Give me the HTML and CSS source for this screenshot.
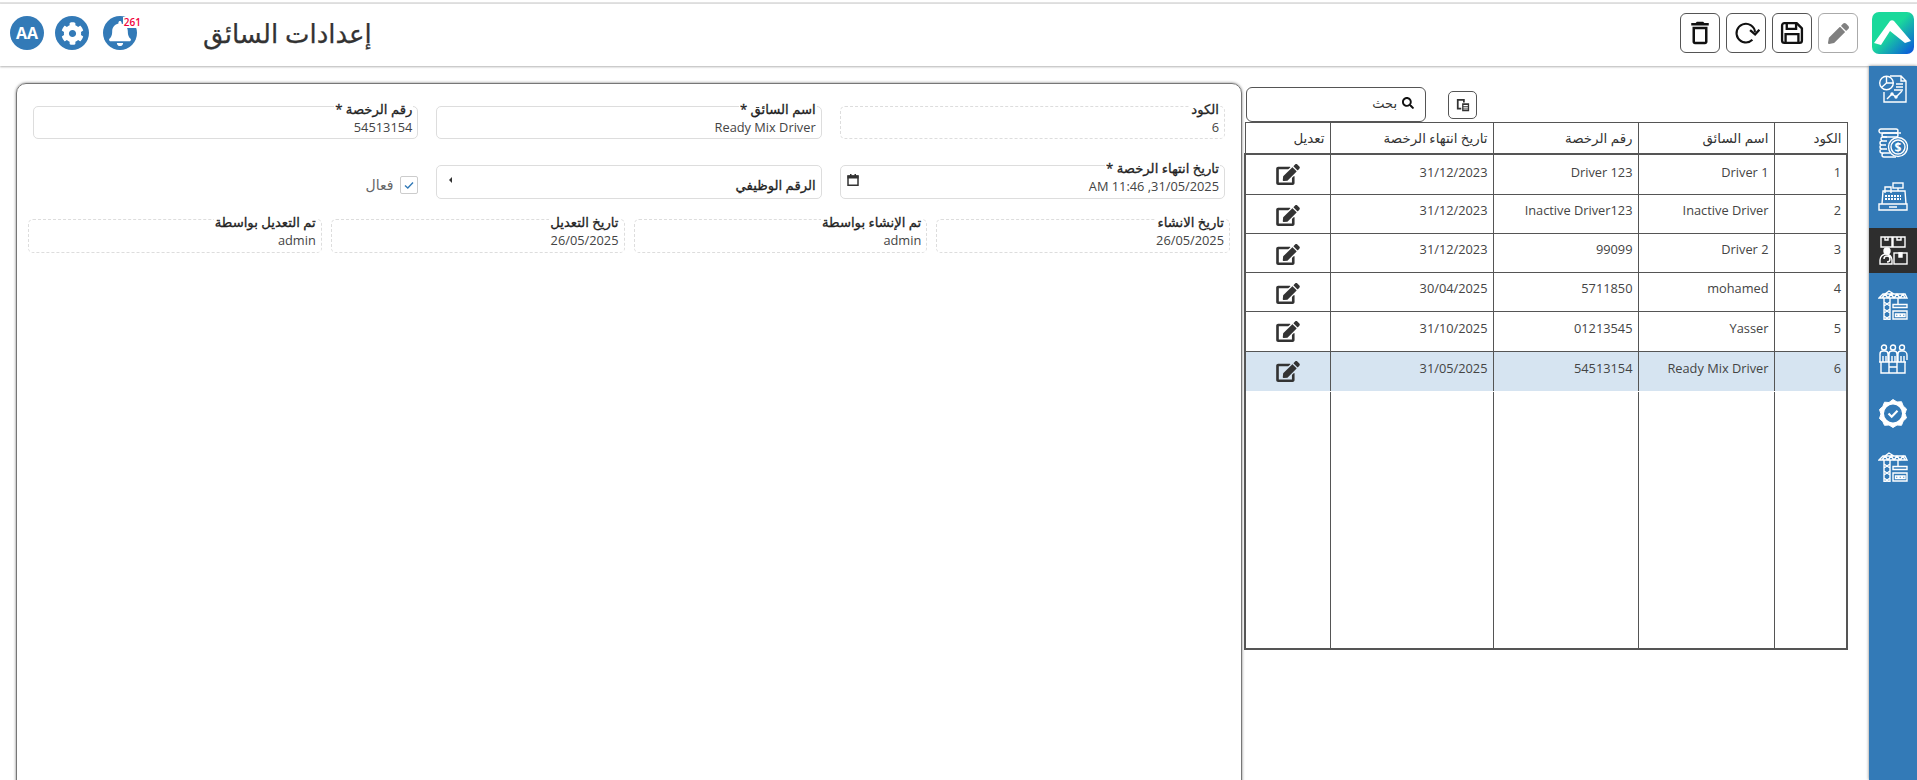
FILE: index.html
```html
<!DOCTYPE html>
<html lang="ar" dir="rtl">
<head>
<meta charset="utf-8">
<title>إعدادات السائق</title>
<link rel="stylesheet" href="styles.css">
</head>
<body>
<div class="topline"></div>
<header class="header">
  <div class="header-start">
    <div class="logo">
      <svg viewBox="0 0 42 42" width="42" height="42">
        <defs><linearGradient id="lg" x1="0" y1="0" x2="1" y2="1"><stop offset="0.45" stop-color="#1ad99b"/><stop offset="1" stop-color="#0a4fe0"/></linearGradient></defs>
        <rect width="42" height="42" rx="7" fill="url(#lg)"/>
        <path d="M2 31L18 9c1-1 3-1 4 0l17 20-6 2-15-12-9 14z" fill="#fff"/>
      </svg>
    </div>
    <div class="actions">
      <button class="tool disabled" type="button"><svg viewBox="0 0 512 512" width="21" height="21"><path fill="#808080" d="M497.9 142.1l-46.1 46.1c-4.7 4.7-12.3 4.7-17 0l-111-111c-4.7-4.7-4.7-12.3 0-17l46.1-46.1c18.7-18.7 49.1-18.7 67.9 0l60.1 60.1c18.8 18.7 18.8 49.1 0 67.9zM284.2 99.8L21.6 362.4.4 483.9c-2.9 16.4 11.4 30.6 27.8 27.8l121.5-21.3 262.6-262.6c4.7-4.7 4.7-12.3 0-17l-111-111c-4.8-4.7-12.4-4.7-17.1 0z"/></svg></button>
      <button class="tool" type="button"><svg viewBox="0 0 24 24" width="28" height="28"><path fill="none" stroke="#111" stroke-width="2" stroke-linejoin="round" d="M3.5 5.5a2 2 0 0 1 2-2H16l4.5 4.5v10.5a2 2 0 0 1-2 2h-13a2 2 0 0 1-2-2z"/><path fill="none" stroke="#111" stroke-width="2" d="M7.5 3.5v5h8v-5M6.500 20.500v-7.500h11v7.500"/></svg></button>
      <button class="tool" type="button"><svg viewBox="0 0 24 24" width="28" height="28"><path fill="none" stroke="#111" stroke-width="1.800" d="M17.500 17.800A8 8 0 1 1 19.800 11"/><path fill="none" stroke="#111" stroke-width="2" d="M15.500 9.500l4.300 3.700 3.700-4"/></svg></button>
      <button class="tool" type="button"><svg viewBox="0 0 24 24" width="30" height="30"><path fill="#111" d="M6 19c0 1.100.9 2 2 2h8c1.100 0 2-.9 2-2V7H6v12zM8 9h8v10H8V9zm7.500-5l-1-1h-5l-1 1H5v2h14V4z"/></svg></button>
    </div>
  </div>
  <div class="header-end">
    <h1 class="title">إعدادات السائق</h1>
    <div class="round-icons">
      <div class="round bell">
        <svg viewBox="0 0 448 512" width="22" height="25"><path fill="#fff" d="M224 512c35.320 0 63.970-28.650 63.970-64H160.030c0 35.350 28.650 64 63.970 64zm215.390-149.710c-19.320-20.760-55.470-51.990-55.470-154.290 0-77.700-54.480-139.900-127.940-155.160V32c0-17.670-14.320-32-31.980-32s-31.980 14.330-31.980 32v20.840C118.560 68.100 64.080 130.300 64.080 208c0 102.300-36.150 133.530-55.470 154.290-6 6.450-8.660 14.160-8.610 21.710.11 16.400 12.980 32 32.100 32h383.800c19.120 0 32-15.600 32.100-32 .05-7.550-2.610-15.270-8.610-21.710z"/></svg>
        <span class="badge">261</span>
      </div>
      <div class="round"><svg viewBox="0 0 512 512" width="23" height="23"><path fill="#fff" d="M487.400 315.700l-42.600-24.600c4.300-23.200 4.300-47 0-70.200l42.600-24.600c4.900-2.800 7.100-8.600 5.500-14-11.100-35.600-30-67.800-54.700-94.600-3.800-4.100-10-5.100-14.800-2.300L380.800 110c-17.900-15.400-38.500-27.300-60.800-35.100V25.800c0-5.600-3.900-10.500-9.400-11.700-36.700-8.200-74.300-7.800-109.200 0-5.500 1.200-9.400 6.100-9.400 11.700V75c-22.200 7.900-42.800 19.800-60.800 35.100L88.700 85.500c-4.900-2.800-11-1.900-14.800 2.300-24.700 26.700-43.600 58.900-54.700 94.600-1.700 5.400.6 11.200 5.500 14L67.300 221c-4.300 23.200-4.300 47 0 70.200l-42.600 24.600c-4.900 2.800-7.100 8.600-5.500 14 11.100 35.600 30 67.800 54.700 94.600 3.800 4.100 10 5.100 14.800 2.300l42.600-24.600c17.900 15.400 38.500 27.300 60.800 35.100v49.200c0 5.600 3.900 10.500 9.400 11.700 36.700 8.200 74.300 7.800 109.200 0 5.500-1.200 9.400-6.100 9.400-11.700v-49.200c22.200-7.900 42.800-19.800 60.800-35.100l42.600 24.600c4.900 2.800 11 1.900 14.800-2.300 24.700-26.700 43.600-58.900 54.700-94.600 1.500-5.500-.7-11.300-5.600-14.100zM256 336c-44.100 0-80-35.900-80-80s35.900-80 80-80 80 35.900 80 80-35.900 80-80 80z"/></svg></div>
      <div class="round avatar">AA</div>
    </div>
  </div>
</header>

<svg class="defs" width="0" height="0">
  <symbol id="i-crane" viewBox="0 0 30 30">
    <path d="M1 8L5 4h22l2 4zM7 4l4-3 5 3M4 8l3-4 3 4 3-4 3 4 3-4 3 4 3-4 2 4"/>
    <path d="M6 8v22h6V8M6 12l6 4M12 12l-6 4M6 19l6 4M12 19l-6 4M6 26l6 4M12 26l-6 4"/>
    <path d="M20 8v6M15 14.500h14v3H15zM15 21h14v8H15zM17.500 24h2.500v2.500h-2.500zM21 24h2.500v2.500H21zM24.500 24H27v2.500h-2.500z"/>
  </symbol>
</svg>

<div class="main">
  <nav class="sidebar">
    <a class="nav-item"><svg class="nav-icon" viewBox="0 0 30 30"><path d="M12 2h11l5 5v21H6V18M23 2v5h5"/><circle cx="8.500" cy="9" r="6.800"/><path d="M8.500 2.200V9h6.800M8.500 9l-5 4.500"/><path d="M18 10h7M18 13h7M16 16h9"/><path d="M9 25l5-5 4 3 6-6"/><circle cx="14" cy="20" r="1"/><circle cx="18" cy="23" r="1"/></svg></a>
    <a class="nav-item"><svg class="nav-icon" viewBox="0 0 30 30"><rect x="1" y="1" width="19" height="4" rx="2"/><rect x="4" y="5" width="16" height="4" rx="2"/><path d="M20 5h3M9 9h-4a2 2 0 0 0 0 4h4M9 13H4a2 2 0 0 0 0 4h4M8 17H4a2 2 0 0 0 0 4h4M9 21H4a2 2 0 0 0 0 4h6M12 25H6a2 2 0 0 0 0 4h12"/><circle cx="20" cy="19" r="9.500"/><circle cx="20" cy="19" r="7"/><text class="dollar" x="20" y="23.500">$</text></svg></a>
    <a class="nav-item"><svg class="nav-icon" viewBox="0 0 30 30"><rect x="15" y="1" width="10" height="5" /><path d="M20 6v3M7 11V5h6v6"/><path d="M4 22l1-13h22l1 13"/><path d="M1 22h28v6H1zM11 25h8"/><path class="dots" d="M7 14h16M7 17h16"/></svg></a>
    <a class="nav-item active"><svg class="nav-icon" viewBox="0 0 30 30"><path d="M3 1h11v10H3zM15 1h12v10H15zM7 1v3h3V1M19 1v3h4V1"/><circle class="solid" cx="9" cy="15" r="3"/><path d="M2 28v-4a6 6 0 0 1 12 0v4zM6 23a3 3 0 1 1 3 3"/><rect x="16" y="17" width="13" height="11"/><path class="solid" d="M21 17v4h3v-4z"/></svg></a>
    <a class="nav-item"><svg class="nav-icon"><use href="#i-crane"/></svg></a>
    <a class="nav-item"><svg class="nav-icon" viewBox="0 0 30 30"><circle cx="6" cy="3.500" r="2.500"/><circle cx="15" cy="3.500" r="2.500"/><circle cx="24" cy="3.500" r="2.500"/><path d="M2 18V10a3 3 0 0 1 3-3h2a3 3 0 0 1 3 3v8M11 18V10a3 3 0 0 1 3-3h2a3 3 0 0 1 3 3v8M20 18V10a3 3 0 0 1 3-3h2a4 4 0 0 1 4 4v5"/><path d="M5 12v6M8 12v6M14 12v6M17 12v6M23 12v6M26 12v6"/><path d="M1 18h27M3 18v11h24V18M3 29h24M11 18v11M19 18v11M11 23h8"/></svg></a>
    <a class="nav-item"><svg class="nav-icon" viewBox="0 0 30 30"><path class="badge-shape" d="M15 1.500l4 2.500 4.500-.3 1.700 4.300 3.300 3-1.500 4.500 1.500 4.500-3.300 3-1.700 4.300-4.500-.3-4 2.500-4-2.500-4.500.3L4.800 23.500l-3.300-3L3 16 1.500 11.500l3.300-3 1.700-4.300 4.500.3z"/><circle class="badge-inner" cx="15" cy="15.500" r="8.300"/><path class="thick" d="M10.500 15.500l3.200 3.200 5.800-6"/></svg></a>
    <a class="nav-item"><svg class="nav-icon"><use href="#i-crane"/></svg></a>
  </nav>

  <section class="list">
    <div class="list-tools">
      <button class="copy" type="button"><svg viewBox="0 0 16 16" width="14" height="14"><path fill="#333" d="M1 1h9v4H8V3H3v8h3v2H1z"/><path fill="#333" d="M7 6h8v9H7zM8.500 8v1H13.500V8zM8.500 10v1H13.500v-1zM8.500 12v1H13.500v-1z"/></svg></button>
      <label class="search">
        <svg viewBox="0 0 512 512" width="12" height="12"><path fill="#111" d="M505 442.700L405.300 343c-4.500-4.500-10.600-7-17-7H372c27.600-35.300 44-79.700 44-128C416 93.100 322.900 0 208 0S0 93.100 0 208s93.100 208 208 208c48.300 0 92.700-16.400 128-44v16.300c0 6.400 2.500 12.500 7 17l99.700 99.700c9.400 9.400 24.600 9.400 33.900 0l28.300-28.300c9.400-9.400 9.400-24.600.1-34zM208 336c-70.700 0-128-57.200-128-128 0-70.700 57.200-128 128-128 70.700 0 128 57.200 128 128 0 70.700-57.200 128-128 128z"/></svg>
        <span>بحث</span>
      </label>
    </div>
    <table class="grid">
      <colgroup><col class="c-code"><col class="c-name"><col class="c-lic"><col class="c-exp"><col class="c-edit"></colgroup>
      <thead><tr><th>الكود</th><th>اسم السائق</th><th>رقم الرخصة</th><th>تاريخ انتهاء الرخصة</th><th>تعديل</th></tr></thead>
      <tbody>
        <tr class="first"><td>1</td><td>Driver 1</td><td>Driver 123</td><td>31/12/2023</td><td class="edit"><svg class="edit-icon"><use href="#i-edit"/></svg></td></tr>
        <tr><td>2</td><td>Inactive Driver</td><td>Inactive Driver123</td><td>31/12/2023</td><td class="edit"><svg class="edit-icon"><use href="#i-edit"/></svg></td></tr>
        <tr><td>3</td><td>Driver 2</td><td>99099</td><td>31/12/2023</td><td class="edit"><svg class="edit-icon"><use href="#i-edit"/></svg></td></tr>
        <tr><td>4</td><td>mohamed</td><td>5711850</td><td>30/04/2025</td><td class="edit"><svg class="edit-icon"><use href="#i-edit"/></svg></td></tr>
        <tr class="tall"><td>5</td><td>Yasser</td><td>01213545</td><td>31/10/2025</td><td class="edit"><svg class="edit-icon"><use href="#i-edit"/></svg></td></tr>
        <tr class="tall selected"><td>6</td><td>Ready Mix Driver</td><td>54513154</td><td>31/05/2025</td><td class="edit"><svg class="edit-icon"><use href="#i-edit"/></svg></td></tr>
        <tr class="filler"><td></td><td></td><td></td><td></td><td></td></tr>
      </tbody>
    </table>
  </section>

  <section class="panel">
    <div class="form-row">
      <div class="field dashed"><label>الكود</label><div class="value">6</div></div>
      <div class="field"><label>اسم السائق *</label><div class="value">Ready Mix Driver</div></div>
      <div class="field"><label>رقم الرخصة *</label><div class="value">54513154</div></div>
    </div>
    <div class="form-row second">
      <div class="field"><label>تاريخ انتهاء الرخصة *</label><div class="value">31/05/2025, 11:46 AM</div>
        <svg class="cal" viewBox="0 0 14 14" width="14" height="14"><path fill="none" stroke="#333" stroke-width="1.500" d="M2 3h10v9.200H2z"/><path fill="#333" d="M1.500 2.500h11v3h-11zM4 1h1.500v2H4zM8.500 1H10v2H8.500z"/></svg>
      </div>
      <div class="field select"><span class="select-text">الرقم الوظيفي</span><span class="caret"></span></div>
      <div class="check-cell"><span class="check"><svg viewBox="0 0 12 12" width="12" height="12"><path fill="none" stroke="#337ab7" stroke-width="1.400" d="M2 6.500l2.800 2.500L10 3.500"/></svg></span><span class="check-label">فعال</span></div>
    </div>
    <div class="form-row audit">
      <div class="field dashed"><label>تاريخ الانشاء</label><div class="value">26/05/2025</div></div>
      <div class="field dashed"><label>تم الإنشاء بواسطة</label><div class="value">admin</div></div>
      <div class="field dashed"><label>تاريخ التعديل</label><div class="value">26/05/2025</div></div>
      <div class="field dashed"><label>تم التعديل بواسطة</label><div class="value">admin</div></div>
    </div>
  </section>
</div>

<svg class="defs" width="0" height="0">
  <symbol id="i-edit" viewBox="0 0 576 512"><path d="M402.600 83.200l90.200 90.200c3.800 3.800 3.800 10 0 13.800L274.400 405.600l-92.800 10.300c-12.400 1.400-22.900-9.100-21.500-21.500l10.300-92.800L388.800 83.200c3.800-3.800 10-3.800 13.800 0zm162-22.900l-48.800-48.800c-15.200-15.200-39.900-15.200-55.200 0l-35.400 35.400c-3.800 3.800-3.800 10 0 13.800l90.200 90.200c3.800 3.800 10 3.800 13.800 0l35.400-35.400c15.200-15.300 15.200-40 0-55.200zM384 346.200V448H64V128h229.800c3.200 0 6.200-1.300 8.500-3.500l40-40c7.600-7.600 2.200-20.500-8.500-20.500H48C21.500 64 0 85.500 0 112v352c0 26.500 21.500 48 48 48h352c26.500 0 48-21.500 48-48V306.200c0-10.700-12.900-16-20.500-8.500l-40 40c-2.200 2.300-3.500 5.300-3.500 8.500z"/></symbol>
</svg>
</body>
</html>
```
FILE: styles.css
```css
* { box-sizing: border-box; }
html, body { margin: 0; height: 100%; overflow: hidden; background: #fff; }
body { font-family: "Open Sans", "Noto Sans", "DejaVu Sans", sans-serif; font-size: 12.8px; color: #333; }
.defs { position: absolute; }

.topline { height: 2px; margin-top: 2px; background: #e2e2e2; }
.header { height: 62px; display: flex; justify-content: space-between; align-items: center; background: #fff; box-shadow: 0 1px 2px rgba(0,0,0,.3); position: relative; z-index: 2; padding: 0 3px 4px 10px; }
.header-start { display: flex; align-items: center; gap: 14px; }
.logo { width: 42px; height: 42px; }
.logo svg { display: block; }
.actions { display: flex; gap: 6px; }
.tool { width: 40px; height: 40px; padding: 0; display: flex; align-items: center; justify-content: center; background: #fff; border: 1px solid #555; border-radius: 6px; }
.tool.disabled { border-color: #aaa; }

.header-end { display: flex; align-items: center; gap: 66px; }
.title { margin: 0; font-size: 26px; font-weight: 400; color: #333; line-height: 40px; -webkit-text-stroke: .25px #333; }
.round-icons { display: flex; align-items: center; gap: 11px; }
.round { width: 34px; height: 34px; border-radius: 50%; background: #337ab7; display: flex; align-items: center; justify-content: center; position: relative; }
.bell { margin-left: 3px; }
.avatar { color: #fff; font-weight: 700; font-size: 16px; font-family: "Open Sans", sans-serif; }
.badge { position: absolute; top: 1px; right: -5px; font-size: 10px; line-height: 11px; font-weight: 600; padding: 0 1px; background: #fff; color: #f0003c; font-family: "Open Sans", sans-serif; }

.main { display: flex; height: 714px; align-items: flex-start; }
.sidebar { width: 48px; height: 714px; background: #337ab7; display: flex; flex-direction: column; gap: 9px; box-shadow: 0 0 3px rgba(0,0,0,.5); position: relative; z-index: 3; flex: none; }
.nav-item { height: 45px; display: flex; align-items: center; justify-content: center; }
.nav-item.active { background: #2e2e2e; }
.nav-icon { width: 30px; height: 30px; fill: none; stroke: #fff; stroke-width: 1.4; }
.nav-icon .dollar { font-size: 12px; text-anchor: middle; fill: #fff; stroke: none; font-family: "Open Sans", sans-serif; font-weight: 700; }
.nav-icon .dots { stroke-dasharray: 2 1; stroke-width: 2; }
.nav-icon .thick { stroke-width: 2.2; }
.nav-icon .solid { fill: #fff; }
.nav-icon .badge-shape { fill: #fff; stroke-width: 1; }
.nav-icon .badge-inner { fill: #337ab7; stroke: #337ab7; }

.list { width: 602px; margin-right: 21px; padding-top: 21px; flex: none; }
.list-tools { display: flex; justify-content: flex-end; align-items: center; height: 35px; gap: 22px; }
.copy { width: 29px; height: 28px; background: #fff; border: 1px solid #555; border-radius: 5px; padding: 0; display: flex; align-items: center; justify-content: center; }
.search { width: 180px; height: 35px; border: 1px solid #555; border-radius: 6px; display: flex; align-items: center; gap: 5px; padding: 0 11px 4px; color: #333; font-size: 13px; }

.grid { width: 602px; height: 528px; border-collapse: collapse; table-layout: fixed; font-size: 12.8px; color: #444; }
.c-code { width: 73px; } .c-name { width: 136px; } .c-lic { width: 145px; } .c-exp { width: 163px; } .c-edit { width: 85px; }
.grid th { height: 31px; font-weight: 400; font-size: 13.4px; text-align: right; padding: 0 5px; border: 1px solid #555; border-bottom: 2px solid #555; color: #333; }
.grid td { height: 39px; text-align: right; vertical-align: top; padding: 6px 5px 0; border-left: 1px solid #555; border-right: 1px solid #555; border-bottom: 1px solid #555; line-height: 18px; }
.grid tbody { border: 2px solid #555; }
.grid tr.first td { height: 41px; padding-top: 8px; }
.grid tr.tall td { height: 40px; padding-top: 7px; }
.grid tr.selected td { background: #d6e4f1; border-bottom-color: #fff; }
.grid tr.filler td { height: auto; border-bottom: 0; }
.grid tr td.edit { text-align: center; padding: 2px 0 0; vertical-align: middle; }
.grid tr.first td.edit { padding: 0; }
.grid tr.tall td.edit { padding: 0; }
.edit-icon { width: 24px; height: 21px; fill: #333; display: block; margin: 0 auto; }

.panel { width: 1226px; height: 720px; margin: 17px 4px 0 0; border: 1px solid #777; border-radius: 10px; box-shadow: 0 0 3px #777; padding: 22px 16px 0; flex: none; }
.form-row { display: grid; grid-template-columns: repeat(3, 1fr); gap: 18px; }
.form-row.second { margin-top: 26px; }
.form-row.audit { grid-template-columns: repeat(4, 1fr); gap: 9px; margin: 20px -5px 0; }

.field { height: 33px; border: 1px solid #ddd; border-radius: 5px; position: relative; padding: 11px 5px 0; }
.second .field { height: 34px; }
.audit .field { height: 34px; }
.field.dashed { border-style: dashed; }
.field label { position: absolute; top: -5px; right: 4px; background: #fff; padding: 0 1px; font-size: 13.2px; line-height: 15px; color: #222; -webkit-text-stroke: .3px #222; }
.value { font-size: 12.8px; line-height: 18px; color: #444; }
.cal { position: absolute; left: 5px; top: 7px; }
.select { display: flex; align-items: center; justify-content: space-between; padding: 5px 5px 0 12px; }
.select-text { font-size: 13.2px; color: #222; -webkit-text-stroke: .3px #222; }
.caret { width: 0; height: 0; border: 3px solid transparent; border-right-color: #333; border-left: 0; margin-top: -9px; }
.check-cell { display: flex; align-items: center; gap: 7px; padding-top: 5px; }
.check { width: 18px; height: 18px; border: 1px solid #ccc; border-radius: 2px; display: flex; align-items: center; justify-content: center; }
.check-label { color: #666; font-size: 14px; }
```
